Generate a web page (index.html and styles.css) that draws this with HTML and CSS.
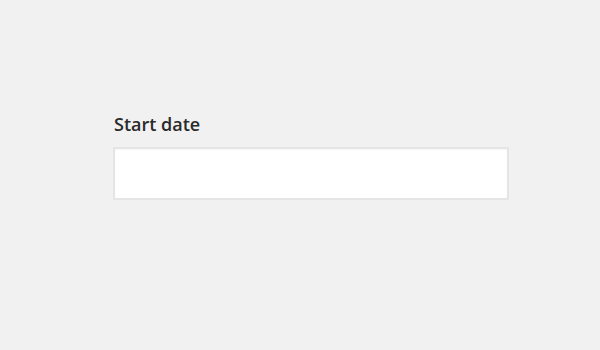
FILE: index.html
```html
<!DOCTYPE html>
<html lang="en">
<head>
<meta charset="utf-8">
<title>Start date</title>
<link rel="stylesheet" href="styles.css">
</head>
<body>
<div class="field">
  <label class="field-label" for="start">Start date</label>
  <input class="field-input" id="start" type="text">
</div>
</body>
</html>
```
FILE: styles.css
```css
html, body {
  margin: 0;
  height: 100%;
  background: #f1f1f1;
}
body {
  font-family: "Open Sans", "Liberation Sans", sans-serif;
  padding: 112px 0 0 113px;
  box-sizing: border-box;
}
.field {
  display: flex;
  flex-direction: column;
  gap: 11px;
  width: 396px;
}
.field-label {
  font-size: 18px;
  line-height: 24px;
  font-weight: 600;
  color: #2a2a2a;
  padding-left: 1px;
}
.field-input {
  box-sizing: border-box;
  width: 396px;
  height: 53px;
  margin: 0;
  padding: 0 10px;
  background: #fff;
  border: 2px solid #e5e5e5;
  box-shadow: inset 0 1px 2px rgba(0,0,0,0.04);
  outline: none;
  font-family: inherit;
  font-size: 16px;
}
```
